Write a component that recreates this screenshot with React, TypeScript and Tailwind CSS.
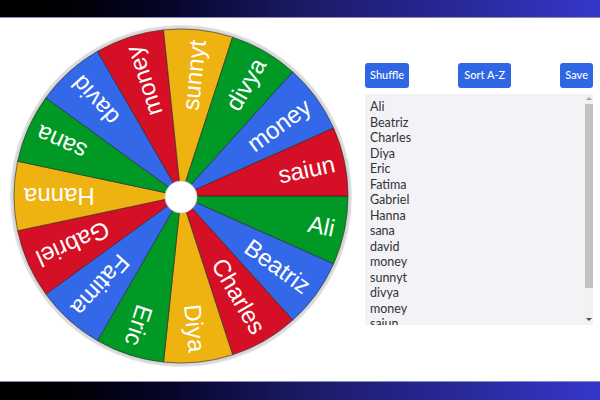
import React from 'react'

const NAMES = [
  'Ali', 'Beatriz', 'Charles', 'Diya', 'Eric', 'Fatima', 'Gabriel', 'Hanna',
  'sana', 'david', 'money', 'sunnyt', 'divya', 'money', 'saiun',
]
const COLORS = ['#009925', '#3369e8', '#d50f25', '#eeb211']

const C = 171
const R = 167

function Wheel() {
  const step = 360 / NAMES.length
  const pt = (deg: number) => {
    const a = (deg * Math.PI) / 180
    return `${C + R * Math.cos(a)} ${C + R * Math.sin(a)}`
  }
  return (
    <svg width={342} height={342} viewBox="0 0 342 342" className="shrink-0">
      <defs>
        <radialGradient id="rim" cx="50%" cy="50%" r="50%">
          <stop offset="96%" stopColor="#bdbdbd" />
          <stop offset="100%" stopColor="#e6e6e6" />
        </radialGradient>
      </defs>
      <circle cx={C} cy={C} r={171} fill="url(#rim)" />
      {NAMES.map((name, i) => {
        const a0 = i * step
        const a1 = a0 + step
        const mid = a0 + step / 2
        return (
          <g key={i}>
            <path
              d={`M ${C} ${C} L ${pt(a0)} A ${R} ${R} 0 0 1 ${pt(a1)} Z`}
              fill={COLORS[i % 4]}
              stroke="#2a2a2a"
              strokeWidth={0.6}
            />
            <text
              x={C + 157}
              y={C}
              transform={`rotate(${mid} ${C} ${C})`}
              textAnchor="end"
              dominantBaseline="central"
              fill="#fff"
              fontSize={24}
              fontFamily="'Liberation Sans', Arial, sans-serif"
            >
              {name}
            </text>
          </g>
        )
      })}
      <circle cx={C} cy={C + 1} r={16} fill="#fff" stroke="#d0d0d0" strokeWidth={0.8} />
    </svg>
  )
}

export default function App() {
  return (
    <div className="flex h-[400px] w-[600px] flex-col overflow-hidden bg-white">
      <div className="h-[18px] shrink-0 border-b border-[#8a8ab8] bg-gradient-to-r from-[#000000] via-[#1a1a66] to-[#3636cc]" />
      <div className="flex h-[363px] shrink-0">
        <div className="ml-[10px] mt-[7px]">
          <Wheel />
        </div>
        <div className="ml-[13px] mt-[45px] flex w-[228px] flex-col font-['Segoe_UI','Lato','Noto_Sans',sans-serif]">
          <div className="flex items-center justify-between">
            <button className="h-[25px] rounded-[3px] bg-[#2f66e3] px-[5px] text-[11px] font-medium text-white">Shuffle</button>
            <button className="h-[25px] rounded-[3px] bg-[#2f66e3] px-[6px] text-[11px] font-medium text-white">Sort A-Z</button>
            <button className="h-[25px] rounded-[3px] bg-[#2f66e3] px-[5px] text-[11px] font-medium text-white">Save</button>
          </div>
          <div className="mt-[6px] flex h-[231px] overflow-hidden bg-[#f2f2f7]">
            <div className="flex-1 overflow-hidden pl-[5px] pt-[5px] text-[12.5px] leading-[15.5px] text-[#333]">
              {NAMES.map((n, i) => (
                <div key={i}>{n}</div>
              ))}
            </div>
            <div className="flex w-[9px] flex-col items-center bg-[#f1f1f1]">
              <div className="mt-[3px] h-0 w-0 border-x-[3px] border-b-[3px] border-x-transparent border-b-[#a3a3a3]" />
              <div className="mt-[4px] h-[184px] w-[8px] bg-[#c1c1c1]" />
              <div className="mt-auto mb-[4px] h-0 w-0 border-x-[3px] border-t-[3px] border-x-transparent border-t-[#505050]" />
            </div>
          </div>
        </div>
      </div>
      <div className="h-[19px] shrink-0 border-t border-[#8a8ab8] bg-gradient-to-r from-[#000000] via-[#1a1a66] to-[#3636cc]" />
    </div>
  )
}
